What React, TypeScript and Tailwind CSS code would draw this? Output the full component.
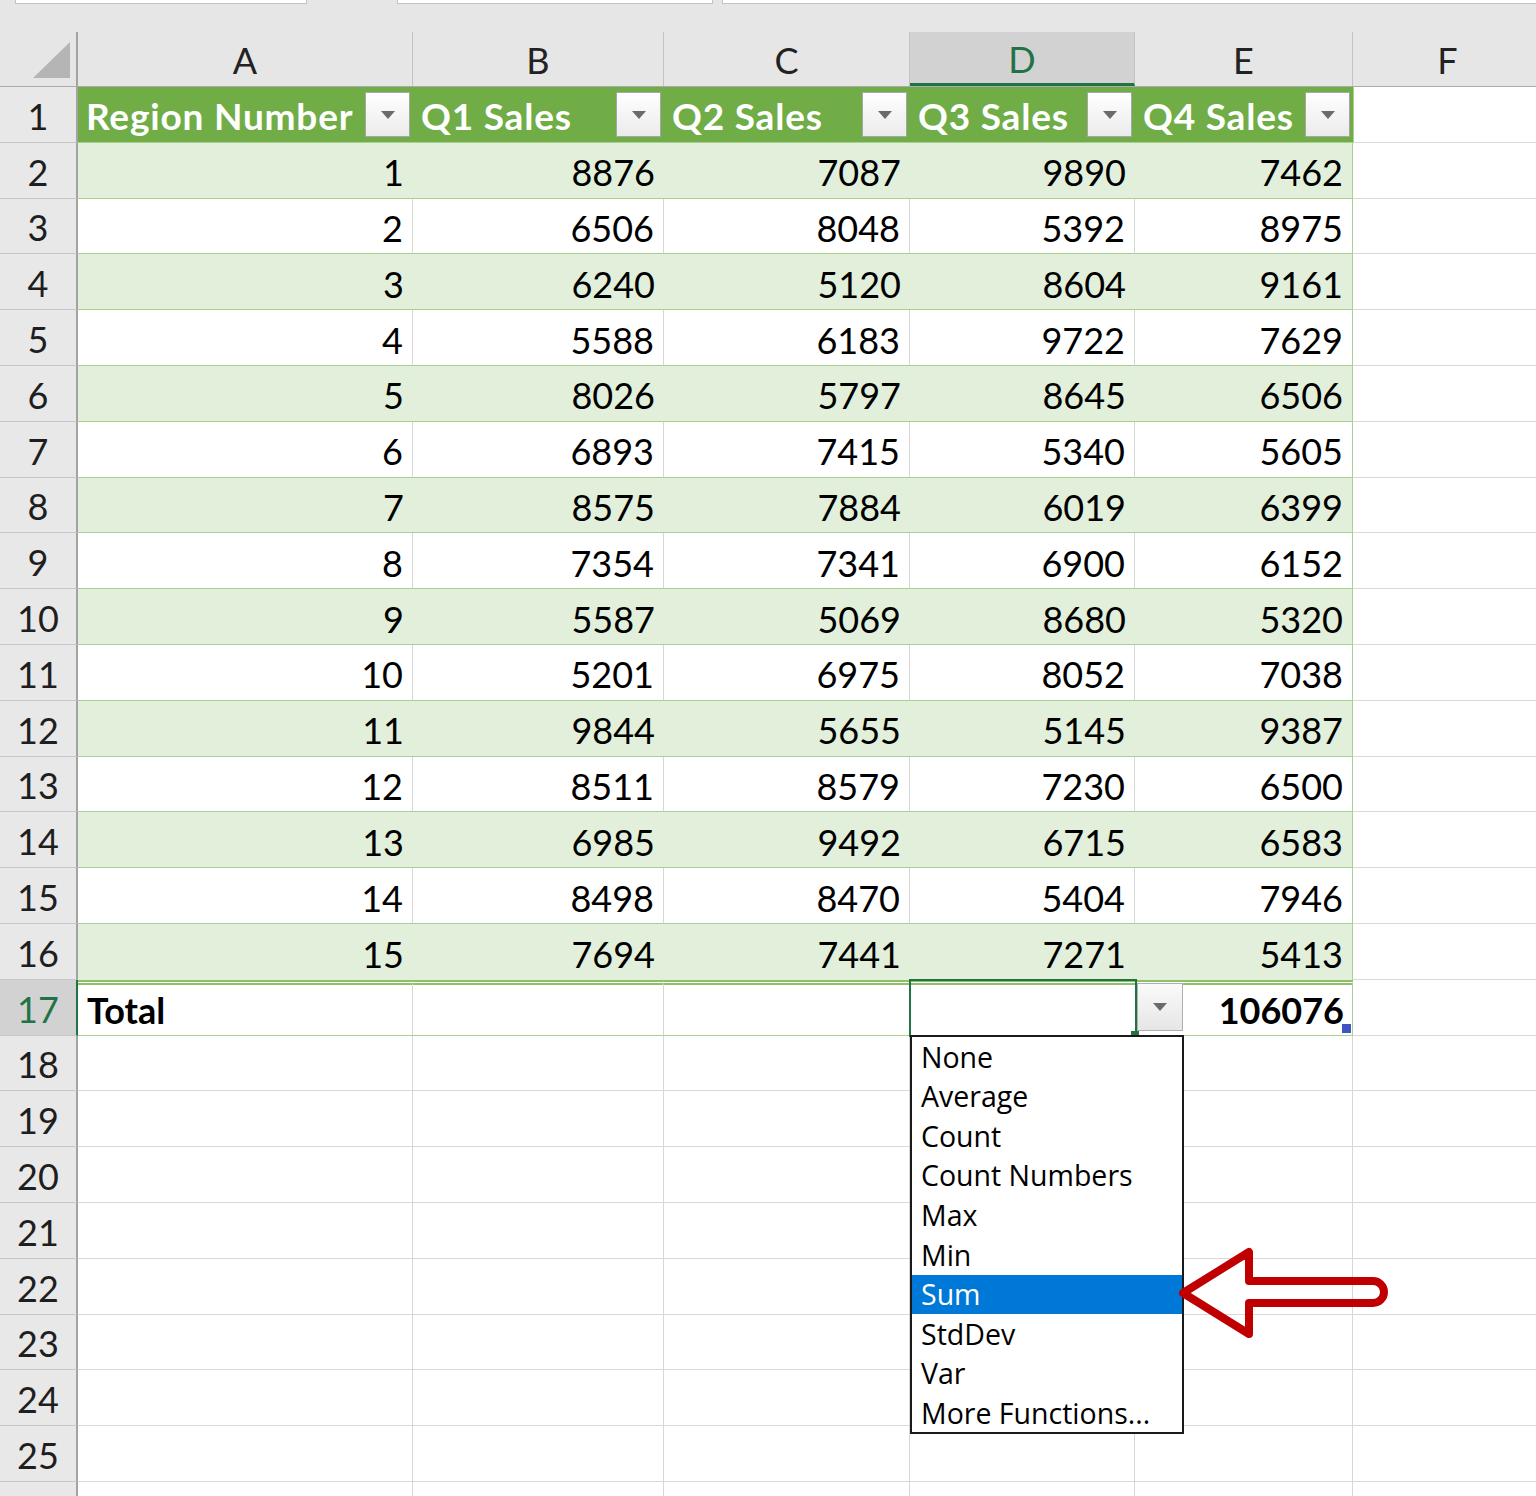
import React from "react";

const data: number[][] = [
  [1, 8876, 7087, 9890, 7462],
  [2, 6506, 8048, 5392, 8975],
  [3, 6240, 5120, 8604, 9161],
  [4, 5588, 6183, 9722, 7629],
  [5, 8026, 5797, 8645, 6506],
  [6, 6893, 7415, 5340, 5605],
  [7, 8575, 7884, 6019, 6399],
  [8, 7354, 7341, 6900, 6152],
  [9, 5587, 5069, 8680, 5320],
  [10, 5201, 6975, 8052, 7038],
  [11, 9844, 5655, 5145, 9387],
  [12, 8511, 8579, 7230, 6500],
  [13, 6985, 9492, 6715, 6583],
  [14, 8498, 8470, 5404, 7946],
  [15, 7694, 7441, 7271, 5413],
];

const colW = ["w-[335px]", "w-[251px]", "w-[246px]", "w-[225px]", "w-[218px]"];
const headers = ["Region Number", "Q1 Sales", "Q2 Sales", "Q3 Sales", "Q4 Sales"];
const menu = ["None", "Average", "Count", "Count Numbers", "Max", "Min", "Sum", "StdDev", "Var", "More Functions..."];

function Tri() {
  return (
    <div className="w-0 h-0 border-l-[7px] border-r-[7px] border-t-[8px] border-l-transparent border-r-transparent border-t-[#6b6b6b]" />
  );
}

function FilterBtn() {
  return (
    <div className="absolute right-[3px] top-[5px] w-[45px] h-[45px] border border-[#a6a6a6] bg-linear-to-b from-white to-[#ebebeb] flex items-center justify-center">
      <Tri />
    </div>
  );
}

function RowHead({ n, sel }: { n: number; sel?: boolean }) {
  return (
    <div
      className={
        sel
          ? "w-[78px] shrink-0 h-full flex items-center justify-center pt-[3px] bg-[#d2d2d2] text-[#217346] border-r-2 border-r-[#217346] border-b border-b-[#c6c6c6] text-[36px]"
          : "w-[78px] shrink-0 h-full flex items-center justify-center pt-[3px] bg-[#e8e8e8] text-[#1e1e1e] border-r-2 border-r-[#a3a3a3] border-b border-b-[#c6c6c6] text-[36px]"
      }
    >
      {n}
    </div>
  );
}

export default function App() {
  return (
    <div className="relative w-[1536px] h-[1496px] overflow-hidden bg-white font-['Lato',sans-serif] leading-none">
      {/* top strip */}
      <div className="h-[32px] bg-[#e6e6e6] flex items-start">
        <div className="ml-[15px] w-[292px] h-[4px] bg-white border-b border-x border-[#c4c4c4]" />
        <div className="ml-[90px] w-[316px] h-[4px] bg-white border-b border-x border-[#c4c4c4]" />
        <div className="ml-[9px] flex-1 h-[4px] bg-white border-b border-l border-[#c4c4c4]" />
      </div>

      {/* column header row */}
      <div className="flex h-[55px] bg-[#e6e6e6] border-b border-[#ababab]">
        <div className="w-[78px] shrink-0 h-full border-r-2 border-r-[#a3a3a3] relative">
          <svg className="absolute left-0 top-0" width="78" height="55">
            <polygon points="70,10 70,46 33,46" fill="#b5b5b5" />
          </svg>
        </div>
        {["A", "B", "C", "D", "E"].map((c, i) => (
          <div
            key={c}
            className={
              c === "D"
                ? colW[i] + " shrink-0 h-full flex items-center justify-center pt-[2px] text-[36px] bg-[#d2d2d2] text-[#217346] border-r border-r-[#c2c2c2] border-b-[3px] border-b-[#217346]"
                : colW[i] + " shrink-0 h-full flex items-center justify-center pt-[2px] text-[36px] text-[#222] border-r border-r-[#c2c2c2]"
            }
          >
            {c}
          </div>
        ))}
        <div className="flex-1 h-full flex items-center justify-center pt-[2px] pl-[6px] text-[36px] text-[#222]">F</div>
      </div>

      {/* row 1: table header */}
      <div className="flex h-[55.8px]">
        <RowHead n={1} />
        {headers.map((h, i) => (
          <div
            key={h}
            className={colW[i] + " shrink-0 h-full relative bg-[#70ad47] text-white font-bold text-[37px] tracking-[0.8px] flex items-center pl-[8px] pt-[2px] border-b border-b-[#a9d08e] whitespace-nowrap"}
          >
            {h}
            <FilterBtn />
          </div>
        ))}
        <div className="flex-1 h-full border-l border-l-[#a9d08e] border-b border-b-[#d9d9d9]" />
      </div>

      {/* data rows */}
      {data.map((row, r) => {
        const band = r % 2 === 0;
        const last = r === data.length - 1;
        return (
          <div key={r} className="flex h-[55.8px]">
            <RowHead n={r + 2} />
            {row.map((v, i) => (
              <div
                key={i}
                className={
                  colW[i] +
                  " shrink-0 h-full flex items-center justify-end pr-[9px] pt-[4px] text-[36px] text-black " +
                  (band ? "bg-[#e2efda] " : "bg-white ") +
                  (last ? "" : "border-b border-b-[#a9d08e] ") +
                  (i === 4
                    ? "border-r border-r-[#a9d08e]"
                    : band
                    ? ""
                    : "border-r border-r-[#d6d6d6]")
                }
              >
                {v}
              </div>
            ))}
            <div className="flex-1 h-full border-b border-b-[#d9d9d9]" />
          </div>
        );
      })}

      {/* row 17: total */}
      <div className="flex h-[55.8px]">
        <RowHead n={17} sel />
        <div className="w-[335px] shrink-0 h-full flex items-center pl-[9px] text-[36px] font-bold text-black border-t-[5px] border-double border-t-[#8cc168] border-b border-b-[#a9d08e] border-r border-r-[#d6d6d6]">
          Total
        </div>
        <div className="w-[251px] shrink-0 h-full border-t-[5px] border-double border-t-[#8cc168] border-b border-b-[#a9d08e] border-r border-r-[#d6d6d6]" />
        <div className="w-[246px] shrink-0 h-full border-t-[5px] border-double border-t-[#8cc168] border-b border-b-[#a9d08e] border-r border-r-[#d6d6d6]" />
        <div className="w-[225px] shrink-0 h-full border-t-[5px] border-double border-t-[#8cc168] border-b border-b-[#a9d08e]" />
        <div className="w-[218px] shrink-0 h-full relative flex items-center justify-end pr-[8px] text-[36px] font-bold text-black border-t-[5px] border-double border-t-[#8cc168] border-b border-b-[#a9d08e] border-r border-r-[#a9d08e]">
          106076
          <div className="absolute right-[1px] bottom-[2px] w-[9px] h-[9px] bg-[#3f55c0]" />
        </div>
        <div className="flex-1 h-full border-b border-b-[#d9d9d9]" />
      </div>

      {/* rows 18-26 */}
      {[18, 19, 20, 21, 22, 23, 24, 25, 26].map((n) => (
        <div key={n} className="flex h-[55.8px]">
          <RowHead n={n} />
          {colW.map((w, i) => (
            <div key={i} className={w + " shrink-0 h-full border-b border-b-[#d9d9d9] border-r border-r-[#d6d6d6]"} />
          ))}
          <div className="flex-1 h-full border-b border-b-[#d9d9d9]" />
        </div>
      ))}

      {/* selection on D17 */}
      <div className="absolute left-[909px] top-[979px] w-[228px] h-[58px] border-2 border-[#217346]" />
      <div className="absolute left-[1131px] top-[1031px] w-[8px] h-[7px] bg-[#217346]" />
      {/* total dropdown button */}
      <div className="absolute left-[1137px] top-[983px] w-[46px] h-[48px] border border-[#b0b0b0] bg-linear-to-b from-[#fafafa] to-[#e6e6e6] flex items-center justify-center">
        <Tri />
      </div>

      {/* dropdown list */}
      <div className="absolute left-[910px] top-[1035px] w-[274px] h-[399px] border-2 border-[#1a1a1a] bg-white font-['Open_Sans',sans-serif]">
        {menu.map((m) => (
          <div
            key={m}
            className={
              m === "Sum"
                ? "h-[39.6px] flex items-center pl-[9px] text-[28.5px] bg-[#0078d7] text-white whitespace-nowrap"
                : "h-[39.6px] flex items-center pl-[9px] text-[28.5px] text-black whitespace-nowrap"
            }
          >
            {m}
          </div>
        ))}
      </div>

      {/* red arrow */}
      <svg className="absolute left-0 top-0 pointer-events-none" width="1536" height="1496">
        <path
          d="M1183,1293 L1249,1252 L1249,1281 L1373,1281 A11,11 0 0 1 1373,1303 L1249,1303 L1249,1334 Z"
          fill="none"
          stroke="#c00000"
          strokeWidth="8"
          strokeLinejoin="round"
        />
      </svg>
    </div>
  );
}
